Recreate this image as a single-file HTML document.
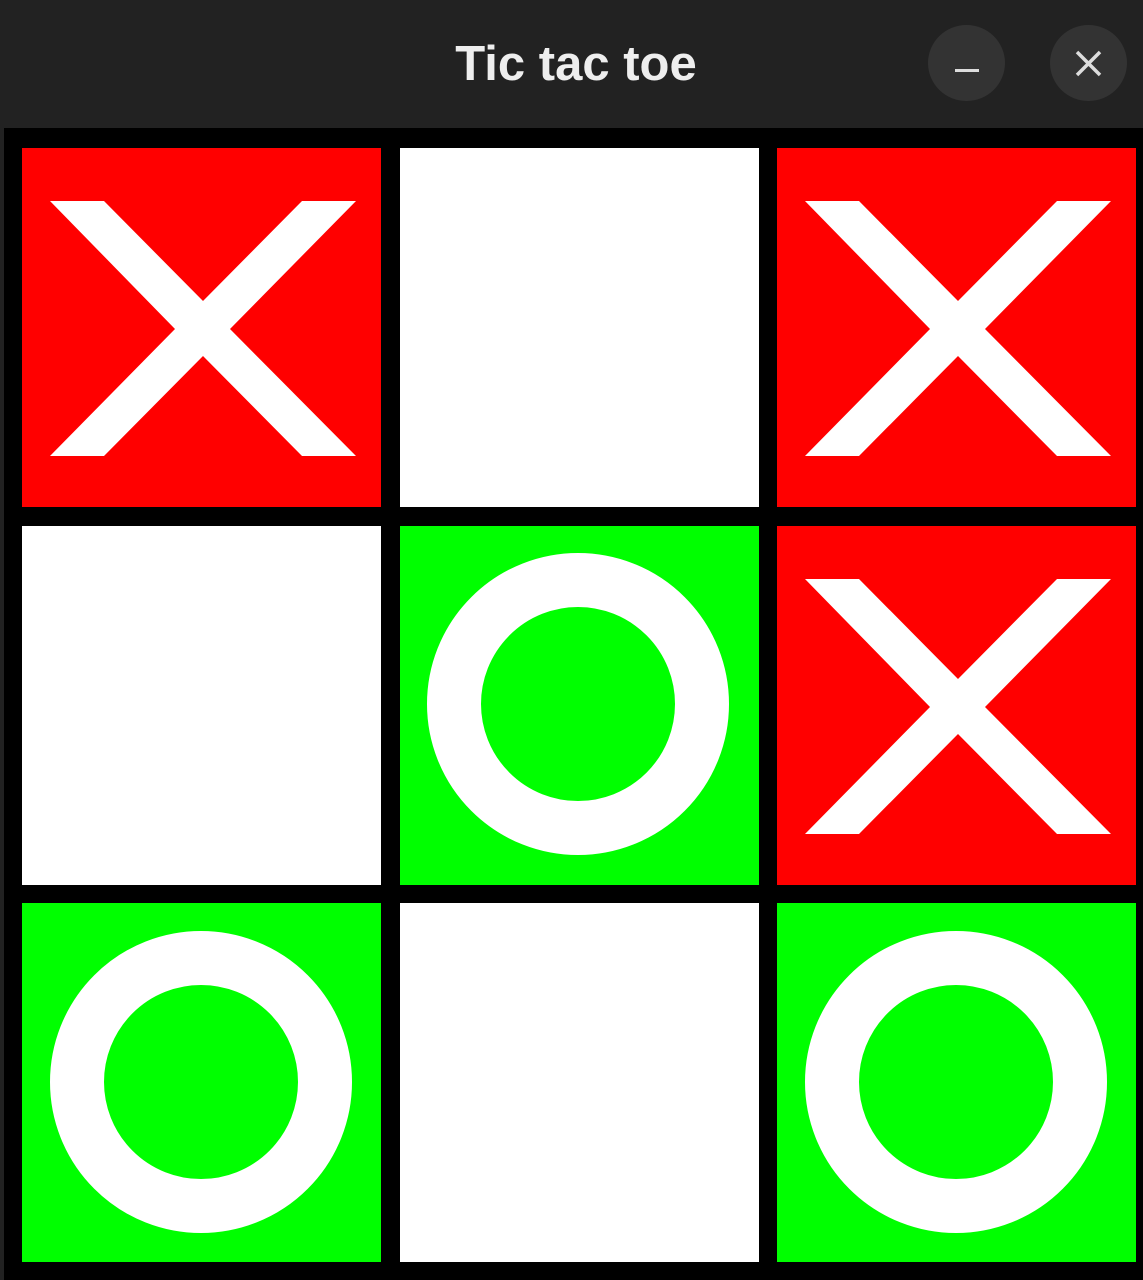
<!DOCTYPE html>
<html><head><style>
html,body{margin:0;padding:0;width:1143px;height:1280px;overflow:hidden;background:#000}
.bar{position:absolute;left:0;top:0;width:1143px;height:128px;background:#222}
.title{position:absolute;left:0;width:1152px;top:36px;text-align:center;color:#eee;font:bold 49px "Liberation Sans",sans-serif;letter-spacing:0px}
.btn{position:absolute;top:25px;width:77px;height:76px;border-radius:50%;background:#333}
.cell{position:absolute;width:359px;height:359px}
.r{background:#f00}.g{background:#0f0}.w{background:#fff}
</style></head><body>
<div class="bar"></div>
<div class="title">Tic tac toe</div>
<div class="btn" style="left:928px"><div style="position:absolute;left:27px;top:44px;width:24px;height:3px;background:#ddd"></div></div>
<div class="btn" style="left:1050px"><svg width="77" height="76" style="position:absolute;left:0;top:0"><path d="M27 27L50 50M50 27L27 50" stroke="#ddd" stroke-width="3.5"/></svg></div>
<div style="position:absolute;left:0;top:128px;width:4px;height:1152px;background:#222"></div>
<svg width="0" height="0" style="position:absolute"><defs>
<polygon id="x" points="28,53 82,53 181,153 280,53 334,53 208,181 334,308 280,308 181,208 82,308 28,308 153,181" fill="#fff"/>
</defs></svg>
<div class="cell r" style="left:22px;top:148px"><svg width="359" height="359"><use href="#x"/></svg></div>
<div class="cell w" style="left:400px;top:148px"></div>
<div class="cell r" style="left:777px;top:148px"><svg width="359" height="359"><use href="#x"/></svg></div>
<div class="cell w" style="left:22px;top:526px"></div>
<div class="cell g" style="left:400px;top:526px"><svg width="359" height="359"><circle cx="178" cy="178" r="124" fill="none" stroke="#fff" stroke-width="54"/></svg></div>
<div class="cell r" style="left:777px;top:526px"><svg width="359" height="359"><use href="#x"/></svg></div>
<div class="cell g" style="left:22px;top:903px"><svg width="359" height="359"><circle cx="179" cy="179" r="124" fill="none" stroke="#fff" stroke-width="54"/></svg></div>
<div class="cell w" style="left:400px;top:903px"></div>
<div class="cell g" style="left:777px;top:903px"><svg width="359" height="359"><circle cx="179" cy="179" r="124" fill="none" stroke="#fff" stroke-width="54"/></svg></div>
</body></html>
